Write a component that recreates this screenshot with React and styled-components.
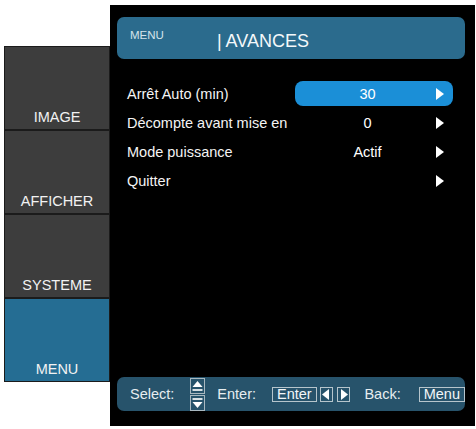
import styled, { createGlobalStyle } from "styled-components";

const GlobalStyle = createGlobalStyle`
  body {
    margin: 0;
    background: #ffffff;
    font-family: "Liberation Sans", Arial, sans-serif;
  }
`;

const tabs = [
  { label: "IMAGE" },
  { label: "AFFICHER" },
  { label: "SYSTEME" },
  { label: "MENU", active: true },
];

const rows = [
  { label: "Arrêt Auto (min)", value: "30", active: true },
  { label: "Décompte avant mise en", value: "0" },
  { label: "Mode puissance", value: "Actif" },
  { label: "Quitter", value: "" },
];

const ArrowRight = () => (
  <svg width="8" height="12" viewBox="0 0 8 12">
    <polygon points="0,0 8,6 0,12" fill="#ffffff" />
  </svg>
);

const SelectIcon = () => (
  <svg width="15" height="33" viewBox="0 0 15 33">
    <rect x="0.5" y="0.5" width="14" height="15" fill="none" stroke="#a8b8c0" />
    <polygon points="7.5,3 12.5,9 2.5,9" fill="#ffffff" />
    <rect x="2.5" y="11" width="10" height="2" fill="#d8e0e4" />
    <rect x="0.5" y="17.5" width="14" height="15" fill="none" stroke="#a8b8c0" />
    <rect x="2.5" y="20" width="10" height="2" fill="#d8e0e4" />
    <polygon points="2.5,24 12.5,24 7.5,30" fill="#ffffff" />
  </svg>
);

const KeyArrow = ({ dir }) => (
  <svg width="8" height="11" viewBox="0 0 8 11">
    {dir === "left" ? (
      <polygon points="7,0 0,5.5 7,11" fill="#ffffff" />
    ) : (
      <polygon points="1,0 8,5.5 1,11" fill="#ffffff" />
    )}
  </svg>
);

const App = () => {
  return (
    <>
      <GlobalStyle />
      <Screen>
        <TabColumn>
          {tabs.map((t) => (
            <Tab key={t.label} $active={t.active}>
              {t.label}
            </Tab>
          ))}
        </TabColumn>
        <Panel>
          <Header>
            <HeaderCrumb>MENU</HeaderCrumb>
            <HeaderTitle>| AVANCES</HeaderTitle>
          </Header>
          <Rows>
            {rows.map((r) => (
              <Row key={r.label}>
                <RowLabel>{r.label}</RowLabel>
                <ValueField $active={r.active}>
                  <Value>{r.value}</Value>
                  <ArrowRight />
                </ValueField>
              </Row>
            ))}
          </Rows>
          <Footer>
            <Hint>Select:</Hint>
            <IconSlot $gap={16}>
              <SelectIcon />
            </IconSlot>
            <Hint $gap={12}>Enter:</Hint>
            <Key $gap={16}>Enter</Key>
            <KeySquare $gap={3}>
              <KeyArrow dir="left" />
            </KeySquare>
            <KeySquare $gap={4}>
              <KeyArrow dir="right" />
            </KeySquare>
            <Hint $gap={14}>Back:</Hint>
            <Key $gap={18}>Menu</Key>
          </Footer>
        </Panel>
      </Screen>
    </>
  );
};

const Screen = styled.div`
  display: flex;
  align-items: flex-start;
  padding-left: 4px;
`;

const TabColumn = styled.nav`
  margin-top: 46px;
  width: 106px;
  box-sizing: border-box;
  padding: 1px;
  background: #1b1b1b;
  display: flex;
  flex-direction: column;
  gap: 2px;
`;

const Tab = styled.div`
  height: 82px;
  display: flex;
  align-items: flex-end;
  justify-content: center;
  padding-bottom: 4px;
  box-sizing: border-box;
  background: ${(p) => (p.$active ? "#256d93" : "#3d3d3d")};
  color: #f2f2f2;
  font-size: 14.5px;
  line-height: 16px;
`;

const Panel = styled.section`
  width: 365px;
  height: 421px;
  margin-top: 5px;
  background: #000000;
  box-sizing: border-box;
  padding: 12px 10px 15px 7px;
  display: flex;
  flex-direction: column;
`;

const Header = styled.div`
  height: 42px;
  border-radius: 7px;
  background: #2b6b8d;
  display: flex;
  align-items: flex-start;
  padding: 0 13px;
`;

const HeaderCrumb = styled.span`
  margin-top: 13px;
  font-size: 11.5px;
  line-height: 1;
  color: #d4e3eb;
`;

const HeaderTitle = styled.span`
  margin-top: 15px;
  margin-left: 53px;
  font-size: 18px;
  line-height: 1;
  color: #f4f8fa;
`;

const Rows = styled.div`
  margin-top: 20px;
  display: flex;
  flex-direction: column;
`;

const Row = styled.div`
  height: 29px;
  display: flex;
  align-items: center;
  padding: 0 12px 0 10px;
`;

const RowLabel = styled.span`
  flex: 1;
  min-width: 0;
  white-space: nowrap;
  font-size: 14.5px;
  color: #f4f4f4;
`;

const ValueField = styled.div`
  width: 158px;
  height: 25px;
  flex-shrink: 0;
  box-sizing: border-box;
  border-radius: 8px;
  background: ${(p) => (p.$active ? "#1b8fd7" : "transparent")};
  display: flex;
  align-items: center;
  padding: 0 9px 0 4px;
`;

const Value = styled.span`
  flex: 1;
  text-align: center;
  font-size: 14.5px;
  color: #ffffff;
`;

const Footer = styled.div`
  margin-top: auto;
  height: 34px;
  border-radius: 7px;
  background: #27536b;
  display: flex;
  align-items: center;
  padding-left: 13px;
  color: #e6edf0;
  font-size: 14.5px;
`;

const Hint = styled.span`
  margin-left: ${(p) => p.$gap || 0}px;
`;

const IconSlot = styled.span`
  display: flex;
  margin-left: ${(p) => p.$gap || 0}px;
`;

const Key = styled.span`
  margin-left: ${(p) => p.$gap || 0}px;
  height: 15px;
  box-sizing: border-box;
  border: 1px solid #b6c5cc;
  padding: 0 4px;
  line-height: 13px;
  color: #f2f6f8;
`;

const KeySquare = styled.span`
  margin-left: ${(p) => p.$gap || 0}px;
  width: 14px;
  height: 15px;
  box-sizing: border-box;
  border: 1px solid #b6c5cc;
  display: flex;
  align-items: center;
  justify-content: center;
`;

export default App;
